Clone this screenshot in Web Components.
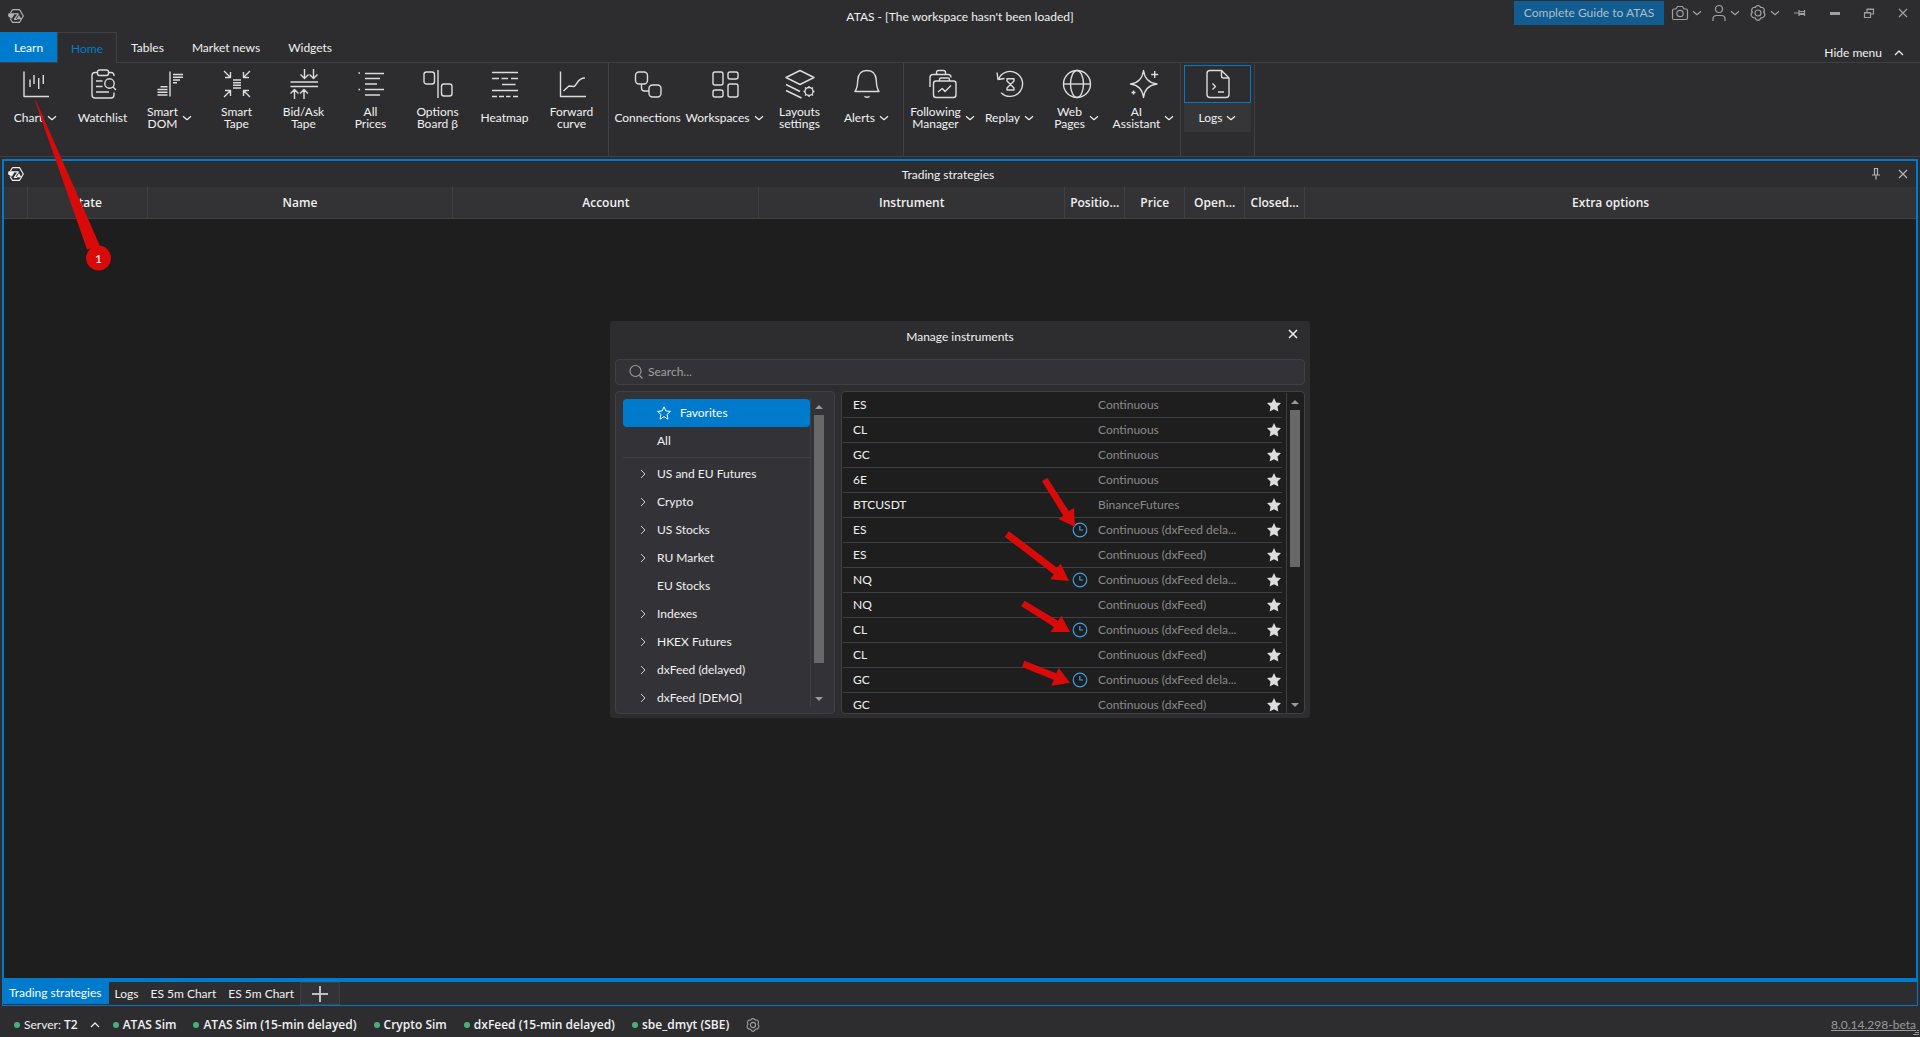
<!DOCTYPE html>
<html lang="en">
<head>
<meta charset="utf-8">
<title>ATAS</title>
<style>
    html, body {
        height: 100%;
        margin: 0;
    }
    body {
        --bold: 600 12px/16px "Open Sans", "Noto Sans", sans-serif;
        background: #2d2d30;
        color: #f1f1f1;
        font: 12px/16px Lato, "Noto Sans", sans-serif;
        overflow: hidden;
    }
</style>
</head>
<body>
<atas-window></atas-window>

<script>
const ICONS = {
    logo: [16, 14, '<path d="M4.400 .700H11.600L15.300 7L11.600 13.300H4.400L2 9.500M2.500 4L4.400 .700"/><path fill="currentColor" stroke="none" d="M.5 4.200H7L3.800 9.800L0 7.200ZM8.500 10.300L11 6L13.400 10.300Z"/><path d="M6.500 4.800H10.300L6.300 10.300H9"/>'],
    chart: [30, 30, '<path d="M3 2.5V27.5H28"/><path d="M9 10.5V18M13 6V15M17.7 9V20M22.3 6V15"/>'],
    watchlist: [30, 30, '<path d="M9 3.5H7A3 3 0 0 0 4 6.500V26A3 3 0 0 0 7 29H23A3 3 0 0 0 26 26V23.500M21 3.500H23A3 3 0 0 1 26 7"/><rect x="9.500" y="1" width="11" height="5.500" rx="2"/><circle cx="21.500" cy="14.500" r="4.700"/><path d="M25 18L28 21M8 12H14.500M8 17.500H14.500M8 23H21"/>'],
    dom: [30, 30, '<path d="M15 2.500V27.500M18 5.500H28M18 8.300H28M18 11H25M18 13.700H22M5.500 17.700H12.500M2.500 20.500H12.500M2.500 23.200H12.500M2.500 26H12.500"/>'],
    tape: [30, 30, '<path d="M2 2L8.500 8.500M8.500 3V8.500H3M28 2L21.500 8.500M21.500 3V8.500H27M2 28L8.500 21.500M8.500 27V21.500H3M28 28L21.500 21.500M21.500 27V21.500H27M11 11H19M11 13.700H19M11 16.300H19M11 19H19"/>'],
    bidask: [30, 30, '<path d="M1.500 13H29M1.500 17.500H29M15.500 0V9M11.500 5.500L15.500 9.500L19.500 5.500M24.500 0V9M20.500 5.500L24.500 9.500L28.500 5.500M5.500 30V21M1.500 24.500L5.500 20.500L9.500 24.500M15 30V21M11 24.500L15 20.500L19 24.500"/>'],
    prices: [30, 30, '<path d="M2.500 4H4M2.500 20.500H4M9 4.500H28M9 9.500H24M9 15H21M9 20.500H28M9 26H24"/>'],
    options: [30, 30, '<rect x="1" y="3" width="10.500" height="12" rx="2.500"/><rect x="18.500" y="15" width="10.500" height="12" rx="2.500"/><path d="M15 1V29"/>'],
    heatmap: [30, 30, '<path d="M2 3.500H28M2 9.500H9M11.500 9.500H18M21 9.500H28M12 15.500H25.500M2 21.500H28M2 27.500H7M9 27.500H14M16 27.500H20.500M23 27.500H28"/>'],
    forward: [30, 30, '<path d="M3.500 2.500V27.500H29M6.500 22L12 17L17 17.500C20 16.500 20 9 28 9"/>'],
    connections: [30, 30, '<rect x="2.500" y="3" width="12" height="12" rx="3.500"/><rect x="16" y="16" width="12" height="12" rx="3.500"/><path d="M8.500 15V19Q8.500 22 11.500 22H16"/>'],
    workspaces: [30, 30, '<rect x="3" y="3" width="10" height="13" rx="2"/><rect x="18" y="3" width="10" height="7" rx="2"/><rect x="3" y="21" width="10" height="7" rx="2"/><rect x="18" y="15" width="10" height="13" rx="2"/>'],
    layouts: [30, 30, '<path d="M15 1.500L29 8.500L15 15.500L1 8.500ZM1 15.500L15 22.500M1 21.500L16.500 29"/><circle cx="24" cy="22.500" r="4"/><path d="M24 17V18.500M24 26.500V28M18.500 22.500H20M28 22.500H29.500M20 18.500L21 19.500M27 25.500L28 26.500M28 18.500L27 19.500M21 25.500L20 26.500"/>'],
    alerts: [30, 30, '<path d="M3 22.500Q5.500 19 5.700 11.500C6 5 9.500 1.500 15 1.500S24 5 24.300 11.500Q24.500 19 27 22.500ZM12.500 27.200Q15 29.500 17.500 27.200"/>'],
    following: [30, 30, '<path d="M2 18V8.500Q2 5.500 5 5.500H20Q23 5.500 23 8.500M8.500 5.500V3.500Q8.500 1.500 10.500 1.500H15.500Q17.500 1.500 17.500 3.500V5.500"/><rect x="5.500" y="12" width="22.500" height="16.500" rx="2.500"/><path d="M11.500 12V10.500Q11.500 9 13 9H20Q21.500 9 21.500 10.500V12M10 23L14.300 19.500L17 22.500L23 16.500"/>'],
    replay: [30, 30, '<path d="M3.500 10.200A12.500 12.500 0 1 1 6.200 23.700M2 3.500L3 10.500L9.500 9.500"/><path d="M12 9.800H19V12L12 19V21H19V19L12 12Z"/>'],
    web: [30, 30, '<circle cx="15" cy="15" r="13.500"/><ellipse cx="15" cy="15" rx="6.500" ry="13.500"/><path d="M1.500 15H28.500"/>'],
    ai: [30, 30, '<path d="M14.500 1.500Q16 13.500 28 15Q16 16.500 14.500 28.500Q13 16.500 1.500 15Q13 13.500 14.500 1.500ZM25.700 2V9M22.200 5.500H29.200M4.500 21.500V25.500M2.500 23.500H6.500"/>'],
    logs: [30, 30, '<path d="M18.500 1.500H7A3 3 0 0 0 4 4.500V25.500A3 3 0 0 0 7 28.500H23A3 3 0 0 0 26 25.500V9L18.500 1.500V7Q18.500 9 20.500 9H26M9.500 14.500L12.500 17.500L9.500 20.500M15 23H21"/>'],
    down: [10, 6, '<path d="M1 1.200L5 4.700L9 1.200"/>'],
    up: [10, 6, '<path d="M1 5L5 1L9 5"/>'],
    right: [6, 10, '<path d="M1 1L5 5L1 9"/>'],
    camera: [16, 16, '<path d="M2 4H4L5.500 1.500H10.500L12 4H14Q15.500 4 15.500 5.500V13Q15.500 14.500 14 14.500H2Q.5 14.500 .5 13V5.500Q.5 4 2 4Z"/><circle cx="8" cy="8.500" r="3.200"/>'],
    user: [14, 16, '<circle cx="7" cy="4" r="3.500"/><path d="M1 16V14Q1 10.500 4.500 10.500H9.500Q13 10.500 13 14V16"/>'],
    gear: [16, 16, '<path d="M8 .7Q10 .7 10.600 2.500Q12.800 1.800 14 3.700Q15 5.500 13.600 7Q15.500 8.500 14.500 11Q13 13.300 10.700 12.800Q10 15.300 8 15.300T5.300 12.800Q3 13.300 1.500 11Q.5 8.500 2.400 7Q1 5.500 2 3.700Q3.200 1.800 5.400 2.500Q6 .7 8 .7Z"/><circle cx="8" cy="8" r="3"/>'],
    pinned: [12, 8, '<path d="M0 4H5M5 1V7M5 2.500H10M5 4.500H10M5 5.500H10M10.500 1V7"/>'],
    minimize: [10, 10, '<path stroke-width="3" d="M0 5.500H10"/>'],
    restore: [10, 10, '<path d="M3 4V1H9.500V6H7M3 1.500H9.500"/><path d="M.5 4.500H6.500V9.500H.5ZM.5 5H6.500"/>'],
    close: [10, 10, '<path d="M1 1L9 9M9 1L1 9"/>'],
    pin: [8, 12, '<path d="M2 .5H6M2.500 0V6.500M5.500 0V6.500M0 7H8M4 7V11.500"/>'],
    search: [14, 14, '<circle cx="6.500" cy="6" r="5.500"/><path d="M10.500 10.500L13.500 13.500"/>'],
    star: [14, 14, '<path fill="currentColor" stroke="none" d="M7 0L9.100 4.400L14 5.100L10.500 8.500L11.300 13.500L7 11.200L2.700 13.500L3.500 8.500L0 5.100L4.900 4.400Z"/>'],
    starLine: [14, 14, '<path d="M7 .8L8.800 4.900L13.400 5.400L10 8.500L11 13.100L7 10.700L3 13.100L4 8.500L.6 5.400L5.200 4.900Z"/>'],
    clock: [16, 16, '<circle cx="8" cy="8" r="6.800"/><path d="M7.800 4V8H11"/>'],
    plus: [16, 16, '<path stroke-width="2" d="M8 0V16M0 8H16"/>'],
    arrowUp: [8, 4, '<path fill="currentColor" stroke="none" d="M0 4L4 0L8 4Z"/>'],
    arrowDown: [8, 4, '<path fill="currentColor" stroke="none" d="M0 0L4 4L8 0Z"/>'],
    grip: [6, 6, '<path stroke-dasharray="1 1" d="M5 0V6M3 2V6M1 4V6"/>']
};

const BUTTON_RESET = `
    button {
        margin: 0;
        padding: 0;
        border: 0;
        background: none;
        color: inherit;
        font: inherit;
        text-align: inherit;
    }
`;

class UiElement extends HTMLElement {
    connectedCallback() {
        if (this.shadowRoot) return;
        this._root = this.attachShadow({ mode: 'open' });
        this._root.innerHTML = `<style>${BUTTON_RESET}</style>` + this._render();
    }
}

class AppIcon extends UiElement {
    _render() {
        const [w, h, shape] = ICONS[this.getAttribute('name')];
        const width = this.getAttribute('width') || w;
        return `
        <style>
            :host { display: block; flex: none; }
            svg {
                display: block;
                fill: none;
                stroke: currentColor;
                stroke-width: var(--icon-stroke, 1.2);
                stroke-linejoin: round;
                overflow: visible;
            }
        </style>
        <svg width="${width}" height="${Math.round(width * h / w)}" viewBox="0 0 ${w} ${h}" aria-hidden="true">${shape}</svg>`;
    }
}

class TitleBar extends UiElement {
    _render() {
        return `
        <style>
            :host {
                display: grid;
                grid-template-columns: 1fr auto 1fr;
                height: 32px;
            }
            .logo { padding: 9px 8px; color: #b4b4b4; }
            .title { padding-top: 9px; }
            .tools {
                display: flex;
                justify-content: flex-end;
                align-items: center;
                height: 26px;
                padding-right: 12px;
                color: #a0a0a0;
            }
            .tools button { display: flex; align-items: center; gap: 4px; }
            .guide {
                width: 150px;
                height: 24px;
                margin-right: 8px;
                background: #115c91;
                color: #b0bcc5;
                justify-content: center;
            }
            .menu { margin-right: 10px; }
            .window { margin-left: 24px; }
            .first { margin-left: 4px; }
        </style>
        <div class="logo"><app-icon name="logo"></app-icon></div>
        <div class="title"><slot></slot></div>
        <div class="tools">
            <button class="guide">Complete Guide to ATAS</button>
            <button class="menu" aria-label="Screenshot"><app-icon name="camera"></app-icon><app-icon name="down"></app-icon></button>
            <button class="menu" aria-label="Account"><app-icon name="user"></app-icon><app-icon name="down"></app-icon></button>
            <button class="menu" aria-label="Settings"><app-icon name="gear"></app-icon><app-icon name="down"></app-icon></button>
            <button class="first" aria-label="Pin"><app-icon name="pinned"></app-icon></button>
            <button class="window" aria-label="Minimize"><app-icon name="minimize"></app-icon></button>
            <button class="window" aria-label="Restore"><app-icon name="restore"></app-icon></button>
            <button class="window" aria-label="Close"><app-icon name="close"></app-icon></button>
        </div>`;
    }
}

class RibbonTabs extends UiElement {
    _render() {
        return `
        <style>
            :host {
                display: flex;
                height: 31px;
                box-shadow: inset 0 -1px #3f3f46;
            }
            button {
                height: 30px;
                padding: 2px 14px 0;
            }
            .learn { background: #007acc; color: #fff; }
            .active {
                height: 31px;
                padding: 1px 13px 0;
                border: solid #3f3f46;
                border-width: 1px 1px 0;
                background: #2d2d30;
                color: #007acc;
            }
            .hide {
                display: flex;
                align-items: center;
                gap: 12px;
                margin-left: auto;
                padding: 12px 16px 0 0;
            }
        </style>
        <button class="learn">Learn</button>
        <button class="active">Home</button>
        <button>Tables</button>
        <button>Market news</button>
        <button>Widgets</button>
        <button class="hide">Hide menu <app-icon name="up"></app-icon></button>`;
    }
}

class RibbonGroup extends UiElement {
    _render() {
        return `
        <style>
            :host {
                display: flex;
                padding: 2px 3px 0;
                border-right: 1px solid #3f3f46;
            }
            :host([first]) { padding-left: 2px; }
            :host([spaced]) { padding-left: 5px; }
        </style>
        <slot></slot>`;
    }
}

class RibbonButton extends UiElement {
    _render() {
        const arrow = this.hasAttribute('menu') ? '<app-icon name="down"></app-icon>' : '';
        return `
        <style>
            :host { display: block; min-width: 67px; }
            :host([size="medium"]) { min-width: 71px; }
            :host([size="large"]) { min-width: 83px; }
            button { display: block; width: 100%; }
            .icon {
                display: flex;
                justify-content: center;
                align-items: center;
                height: 36px;
                border: 1px solid transparent;
                color: #dcdcdc;
                --icon-stroke: 1.4;
            }
            .label {
                display: flex;
                justify-content: center;
                align-items: center;
                gap: 4px;
                height: 29px;
                line-height: 12px;
                text-align: center;
                white-space: nowrap;
            }
            :host([selected]) .icon { border-color: #007acc; }
            :host([selected]) .label { background: #363638; }
        </style>
        <button>
            <span class="icon"><app-icon name="${this.getAttribute('icon')}"></app-icon></span>
            <span class="label"><span><slot></slot></span>${arrow}</span>
        </button>`;
    }
}

class RibbonBar extends UiElement {
    _render() {
        return `
        <style>
            :host {
                display: flex;
                height: 93px;
                border-bottom: 1px solid #3f3f46;
            }
        </style>
        <ribbon-group first>
            <ribbon-button icon="chart" menu>Chart</ribbon-button>
            <ribbon-button icon="watchlist">Watchlist</ribbon-button>
            <ribbon-button icon="dom" menu>Smart<br>DOM</ribbon-button>
            <ribbon-button icon="tape">Smart<br>Tape</ribbon-button>
            <ribbon-button icon="bidask">Bid/Ask<br>Tape</ribbon-button>
            <ribbon-button icon="prices">All<br>Prices</ribbon-button>
            <ribbon-button icon="options">Options<br>Board β</ribbon-button>
            <ribbon-button icon="heatmap">Heatmap</ribbon-button>
            <ribbon-button icon="forward">Forward<br>curve</ribbon-button>
        </ribbon-group>
        <ribbon-group>
            <ribbon-button icon="connections" size="medium">Connections</ribbon-button>
            <ribbon-button icon="workspaces" size="large" menu>Workspaces</ribbon-button>
            <ribbon-button icon="layouts">Layouts<br>settings</ribbon-button>
            <ribbon-button icon="alerts" menu>Alerts</ribbon-button>
        </ribbon-group>
        <ribbon-group spaced>
            <ribbon-button icon="following" menu>Following<br>Manager</ribbon-button>
            <ribbon-button icon="replay" menu>Replay</ribbon-button>
            <ribbon-button icon="web" menu>Web<br>Pages</ribbon-button>
            <ribbon-button icon="ai" menu>AI<br>Assistant</ribbon-button>
        </ribbon-group>
        <ribbon-group>
            <ribbon-button icon="logs" menu selected>Logs</ribbon-button>
        </ribbon-group>`;
    }
}

class StrategyPanel extends UiElement {
    _render() {
        return `
        <style>
            :host {
                display: flex;
                flex-direction: column;
                flex: 1;
                border: 2px solid #007acc;
                border-bottom-width: 4px;
                background: #1e1e1e;
            }
            header {
                display: grid;
                grid-template-columns: auto 1fr auto;
                align-items: center;
                height: 26px;
                padding: 0 8px 0 4px;
                background: #2d2d30;
                text-align: center;
            }
            .caption { padding-top: 2px; }
            .tools {
                display: flex;
                align-items: center;
                gap: 18px;
                color: #b4b4b4;
            }
            table {
                width: 100%;
                border-collapse: collapse;
                table-layout: fixed;
                background: #333335;
            }
            th {
                box-sizing: border-box;
                height: 31px;
                padding: 2px 0 0;
                border-right: 1px solid #3f3f46;
                border-bottom: 1px solid #3f3f46;
                font: var(--bold);
                white-space: nowrap;
            }
            th:last-child { border-right: 0; }
            .handle { width: 23px; }
            .state { width: 120px; }
            .wide { width: 16%; }
            .narrow { width: 60px; }
        </style>
        <header>
            <app-icon name="logo"></app-icon>
            <span class="caption"><slot></slot></span>
            <div class="tools">
                <button aria-label="Pin panel"><app-icon name="pin"></app-icon></button>
                <button aria-label="Close panel"><app-icon name="close"></app-icon></button>
            </div>
        </header>
        <table>
            <thead>
                <tr>
                    <th class="handle"></th>
                    <th class="state">State</th>
                    <th class="wide">Name</th>
                    <th class="wide">Account</th>
                    <th class="wide">Instrument</th>
                    <th class="narrow">Positio...</th>
                    <th class="narrow">Price</th>
                    <th class="narrow">Open...</th>
                    <th class="narrow">Closed...</th>
                    <th>Extra options</th>
                </tr>
            </thead>
        </table>`;
    }
}

class DockTabs extends UiElement {
    _render() {
        return `
        <style>
            :host {
                display: flex;
                height: 23px;
                border: solid #007acc;
                border-width: 0 1px 1px;
            }
            button { padding: 0 6px; }
            .active {
                margin-bottom: 1px;
                padding: 0 7px 0 6px;
                background: #007acc;
                color: #fff;
            }
            .add {
                display: flex;
                justify-content: center;
                align-items: center;
                width: 40px;
                border: 1px solid #3f3f46;
                background: #333337;
                color: #c0c0c0;
            }
        </style>
        <button class="active">Trading strategies</button>
        <button>Logs</button>
        <button>ES 5m Chart</button>
        <button>ES 5m Chart</button>
        <button class="add" aria-label="Add tab"><app-icon name="plus"></app-icon></button>`;
    }
}

class StatusItem extends UiElement {
    _render() {
        return `
        <style>
            :host {
                display: flex;
                align-items: center;
                gap: 4px;
                font: var(--bold);
            }
            .dot {
                width: 6px;
                height: 6px;
                border-radius: 50%;
                background: #4caf7a;
            }
        </style>
        <span class="dot"></span>
        <span><slot></slot></span>`;
    }
}

class StatusBar extends UiElement {
    _render() {
        return `
        <style>
            :host {
                display: flex;
                align-items: center;
                gap: 17px;
                height: 25px;
                padding: 6px 4px 0 14px;
            }
            .server { display: flex; align-items: center; gap: 12px; margin-right: -4px; }
            .caption { font-family: Lato, sans-serif; font-weight: 400; }
            .gear { color: #a0a0a0; }
            a { margin-left: auto; color: #999; }
        </style>
        <div class="server">
            <status-item><span class="caption">Server:</span> T2</status-item>
            <button aria-label="Server list"><app-icon name="up"></app-icon></button>
        </div>
        <status-item>ATAS Sim</status-item>
        <status-item>ATAS Sim (15-min delayed)</status-item>
        <status-item>Crypto Sim</status-item>
        <status-item>dxFeed (15-min delayed)</status-item>
        <status-item>sbe_dmyt (SBE)</status-item>
        <button class="gear" aria-label="Connection settings"><app-icon name="gear" width="14"></app-icon></button>
        <a href="#version">8.0.14.298-beta</a>`;
    }
}

class ScrollStrip extends UiElement {
    _render() {
        return `
        <style>
            :host {
                display: flex;
                flex-direction: column;
                align-items: center;
                width: 16px;
                border-left: 1px solid #3f3f46;
                color: #999;
            }
            button {
                display: flex;
                justify-content: center;
                align-items: center;
                width: 16px;
                height: 17px;
            }
            .track { flex: 1; width: 10px; }
            .thumb { height: ${this.getAttribute('size')}; background: #686868; }
        </style>
        <button aria-label="Scroll up"><app-icon name="arrowUp"></app-icon></button>
        <div class="track"><div class="thumb"></div></div>
        <button aria-label="Scroll down"><app-icon name="arrowDown"></app-icon></button>`;
    }
}

class CategoryItem extends UiElement {
    _render() {
        const arrow = this.hasAttribute('leaf') ? '' : '<app-icon name="right"></app-icon>';
        const star = this.hasAttribute('selected') ? '<app-icon name="starLine"></app-icon>' : '';
        return `
        <style>
            :host { display: block; --icon-stroke: 1; }
            button {
                display: flex;
                align-items: center;
                width: 100%;
                height: 28px;
            }
            .arrow {
                display: flex;
                width: 17px;
                padding-left: 17px;
                color: #d0d0d0;
            }
            .label { display: flex; align-items: center; gap: 9px; }
            :host([selected]) button {
                border-radius: 4px;
                background: #007acc;
                color: #fff;
            }
        </style>
        <button><span class="arrow">${arrow}</span><span class="label">${star}<slot></slot></span></button>`;
    }
}

class InstrumentList extends UiElement {
    static get rows() {
        return [
            ['ES', 'Continuous'],
            ['CL', 'Continuous'],
            ['GC', 'Continuous'],
            ['6E', 'Continuous'],
            ['BTCUSDT', 'BinanceFutures'],
            ['ES', 'Continuous (dxFeed dela...', true],
            ['ES', 'Continuous (dxFeed)'],
            ['NQ', 'Continuous (dxFeed dela...', true],
            ['NQ', 'Continuous (dxFeed)'],
            ['CL', 'Continuous (dxFeed dela...', true],
            ['CL', 'Continuous (dxFeed)'],
            ['GC', 'Continuous (dxFeed dela...', true],
            ['GC', 'Continuous (dxFeed)']
        ];
    }

    _renderRow([name, source, delayed]) {
        return `
        <tr>
            <td class="name">${name}</td>
            <td class="clock">${delayed ? '<app-icon name="clock"></app-icon>' : ''}</td>
            <td class="source">${source}</td>
            <td class="star"><button aria-label="Remove from favorites"><app-icon name="star"></app-icon></button></td>
        </tr>`;
    }

    _render() {
        return `
        <style>
            :host { display: block; overflow: hidden; }
            table {
                width: 100%;
                border-collapse: collapse;
                table-layout: fixed;
            }
            td {
                height: 24px;
                padding: 0;
                border-bottom: 1px solid #3f3f46;
                white-space: nowrap;
            }
            .name { padding-left: 10px; }
            .clock { width: 26px; color: #3f9fdf; }
            .source { width: 169px; color: #8a8a8a; }
            .star { width: 15px; color: #dcdcdc; }
            button { display: block; }
        </style>
        <table>${InstrumentList.rows.map(row => this._renderRow(row)).join('')}</table>`;
    }
}

class InstrumentsDialog extends UiElement {
    _render() {
        return `
        <style>
            :host {
                display: grid;
                grid-template-rows: 32px 26px 323px;
                row-gap: 6px;
                box-sizing: border-box;
                width: 700px;
                padding: 0 5px 4px;
                border-radius: 4px;
                background: #2d2d30;
            }
            header {
                display: grid;
                grid-template-columns: 1fr auto 1fr;
                align-items: center;
            }
            header button {
                justify-self: end;
                align-self: start;
                margin: 8px 7px 0 0;
                --icon-stroke: 1.5;
            }
            .search {
                display: flex;
                align-items: center;
                box-sizing: border-box;
                gap: 5px;
                padding: 0 13px;
                border: 1px solid #3f3f46;
                border-radius: 4px;
                background: #333337;
                color: #999;
            }
            input {
                flex: 1;
                padding: 0;
                border: 0;
                outline: 0;
                background: none;
                color: inherit;
                font: inherit;
            }
            input::placeholder { color: #a0a0a0; }
            .columns {
                display: grid;
                grid-template-columns: 220px 1fr;
                gap: 6px;
                min-height: 0;
            }
            .box {
                display: flex;
                box-sizing: border-box;
                min-height: 0;
                border: 1px solid #3f3f46;
                border-radius: 4px;
                overflow: hidden;
            }
            .categories { padding: 6px 7px; background: #333337; }
            nav { flex: 1; padding-top: 1px; }
            hr {
                height: 1px;
                margin: 2px 0;
                border: 0;
                background: #3f3f46;
            }
            .list { padding: 1px 1px 0; background: #1e1e1e; }
            instrument-list { flex: 1; margin-right: 4px; }
            .arrows {
                position: absolute;
                inset: 0;
                fill: #d80a0a;
                pointer-events: none;
            }
        </style>
        <header>
            <span></span>
            <slot></slot>
            <button aria-label="Close dialog"><app-icon name="close"></app-icon></button>
        </header>
        <label class="search">
            <app-icon name="search"></app-icon>
            <input type="text" placeholder="Search..." aria-label="Search instruments">
        </label>
        <div class="columns">
            <div class="box categories">
                <nav>
                    <category-item leaf selected>Favorites</category-item>
                    <category-item leaf>All</category-item>
                    <hr>
                    <category-item>US and EU Futures</category-item>
                    <category-item>Crypto</category-item>
                    <category-item>US Stocks</category-item>
                    <category-item>RU Market</category-item>
                    <category-item leaf>EU Stocks</category-item>
                    <category-item>Indexes</category-item>
                    <category-item>HKEX Futures</category-item>
                    <category-item>dxFeed (delayed)</category-item>
                    <category-item>dxFeed [DEMO]</category-item>
                </nav>
                <scroll-strip size="90%"></scroll-strip>
            </div>
            <div class="box list">
                <instrument-list></instrument-list>
                <scroll-strip size="55%"></scroll-strip>
            </div>
        </div>
        <svg class="arrows" width="700" height="397" viewBox="0 0 700 397" aria-hidden="true">
            <path d="M432 160.300L437.300 156.700L458.700 190L464 187L465 205.700L448.300 198L453.300 194.700Z"/>
            <path d="M394.700 215.700L399 210.300L447 246.700L450.700 242.700L459 260L440.300 258.300L443.700 253.300Z"/>
            <path d="M411 285L414.700 279.700L448 299.700L451.300 294.700L460 311L440.700 311L444 306Z"/>
            <path d="M412 346L414.300 339.700L446.300 352.300L448.700 347L460 361.700L441.300 364.700L443.700 358.700Z"/>
        </svg>`;
    }
}

// Numbered marker whose tail starts at the Chart button
class CallOut extends UiElement {
    _render() {
        return `
        <style>
            :host {
                position: absolute;
                left: 35px;
                top: 101px;
                pointer-events: none;
            }
            svg { display: block; fill: #d80a0a; }
            span {
                position: absolute;
                right: 0;
                bottom: 0;
                width: 25px;
                line-height: 25px;
                text-align: center;
                color: #fff;
            }
        </style>
        <svg width="76" height="170" viewBox="0 0 76 170" aria-hidden="true">
            <path d="M0 0L1 0L65 145L52 148.500Z"/>
            <circle cx="63.500" cy="157" r="12.500"/>
        </svg>
        <span><slot></slot></span>`;
    }
}

class AtasWindow extends UiElement {
    _render() {
        return `
        <style>
            :host {
                display: flex;
                flex-direction: column;
                height: 100%;
            }
            main {
                display: flex;
                flex-direction: column;
                flex: 1;
                padding: 2px 2px 0;
            }
            instruments-dialog {
                position: absolute;
                inset: 2px 0 0;
                height: fit-content;
                margin: auto;
            }
            .grip {
                position: absolute;
                right: 1px;
                bottom: 1px;
                color: #dcdcdc;
            }
        </style>
        <title-bar>ATAS - [The workspace hasn't been loaded]</title-bar>
        <ribbon-tabs></ribbon-tabs>
        <ribbon-bar></ribbon-bar>
        <main>
            <strategy-panel>Trading strategies</strategy-panel>
            <dock-tabs></dock-tabs>
        </main>
        <status-bar></status-bar>
        <instruments-dialog>Manage instruments</instruments-dialog>
        <call-out>1</call-out>
        <app-icon class="grip" name="grip"></app-icon>`;
    }
}

customElements.define('app-icon', AppIcon);
customElements.define('title-bar', TitleBar);
customElements.define('ribbon-tabs', RibbonTabs);
customElements.define('ribbon-group', RibbonGroup);
customElements.define('ribbon-button', RibbonButton);
customElements.define('ribbon-bar', RibbonBar);
customElements.define('strategy-panel', StrategyPanel);
customElements.define('dock-tabs', DockTabs);
customElements.define('status-item', StatusItem);
customElements.define('status-bar', StatusBar);
customElements.define('scroll-strip', ScrollStrip);
customElements.define('category-item', CategoryItem);
customElements.define('instrument-list', InstrumentList);
customElements.define('instruments-dialog', InstrumentsDialog);
customElements.define('call-out', CallOut);
customElements.define('atas-window', AtasWindow);
</script>
</body>
</html>
